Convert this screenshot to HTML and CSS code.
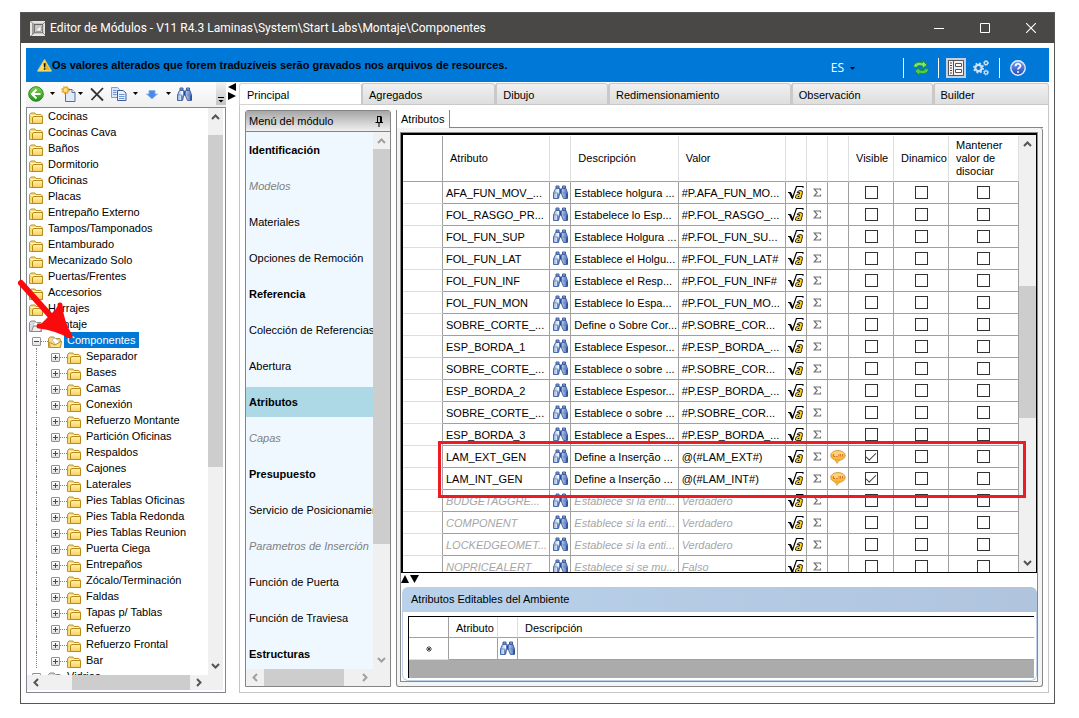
FILE: index.html
```html
<!DOCTYPE html>
<html lang="es">
<head>
<meta charset="utf-8">
<title>Editor de Módulos</title>
<link rel="stylesheet" href="styles.css">
</head>
<body>
<svg class="defs" aria-hidden="true">
  <defs>
    <linearGradient id="gFolder" x1="0" y1="0" x2="0" y2="1"><stop offset="0" stop-color="#fff3b0"/><stop offset="1" stop-color="#f6cf58"/></linearGradient>
    <linearGradient id="gGreen" x1="0" y1="0" x2="0" y2="1"><stop offset="0" stop-color="#7fd34a"/><stop offset="1" stop-color="#1f8f1c"/></linearGradient>
    <linearGradient id="gTube" x1="0" y1="0" x2="1" y2="0"><stop offset="0" stop-color="#8fb0e0"/><stop offset=".35" stop-color="#f4f9ff"/><stop offset="1" stop-color="#4a6fb8"/></linearGradient>
    <linearGradient id="gHelp" x1="0" y1="0" x2="0" y2="1"><stop offset="0" stop-color="#7fa3f0"/><stop offset="1" stop-color="#1c46c0"/></linearGradient>
  </defs>
  <symbol id="folder" viewBox="0 0 14 12"><path d="M.5 11.500V2.500L2 1h4l1 1.500h5l1 1v8z" fill="#f8dc80" stroke="#bd9430"/><path d="M3.500 11.500V6L4.500 4.500h9v7z" fill="url(#gFolder)" stroke="#b88a1c"/><path d="M2 3.500h10" stroke="#fff8d0"/></symbol>
  <symbol id="folder-open" viewBox="0 0 14 12"><path d="M.5 11.500V2.500L2 1h4l1 1.500h5l.5 2v7z" fill="#f0d890" stroke="#b8902c"/><path d="M4 4l3-2 5 4-4 3z" fill="#fff" stroke="#aaa" stroke-width=".6"/><path d="M2.500 11.500L.5 6 7 9l6.500-4-1 6.500z" fill="#fbe08a" stroke="#b8902c"/></symbol>
  <symbol id="folder-gray" viewBox="0 0 14 12"><path d="M.5 11.500V2.500L2 1h4l1 1.500h5l.5 2v7z" fill="#ddd" stroke="#888"/><path d="M4 4l3-2 5 4-4 3z" fill="#fff" stroke="#aaa" stroke-width=".6"/><path d="M2.500 11.500L4.500 6h9l-2 5.500z" fill="#eee" stroke="#888"/></symbol>
  <symbol id="binoc" viewBox="0 0 15 14"><path d="M3 1h3v2H3zM9.500 1h3v2h-3z" fill="#9db9e4" stroke="#2d4f94" stroke-width=".9"/><path d="M2.500 3.500h4.500v4L5.500 13.500h-5V8zM8.500 3.500H13L14.500 8v5.500h-4L8.500 9z" fill="url(#gTube)" stroke="#3a5da3" stroke-width=".9"/><path d="M6.500 4h2v4.500h-2zM.5 8h5M9.500 8h5" fill="#274a96" stroke="#5d7fc0" stroke-width=".7"/><path d="M5 8.500V13M14 8.500V13" stroke="#24458e" stroke-width="1.200"/></symbol>
  <symbol id="root" viewBox="0 0 16 15"><path d="M0 7.500h2L4.500 13 8.500 1.500H15" fill="none" stroke="#000" stroke-width="1.200"/><path d="M2 7.500L4.500 13" stroke="#000" stroke-width="2"/><path d="M15 1v2" stroke="#000"/><path d="M9 7.500Q10 5.500 12 5.500q3 0 2.500 2L13 13.500H8.500Q7 13.500 7.500 11.500 8 9.500 10 9h1.500V7.500z" fill="#ffcc12" stroke="#000" stroke-width=".8"/><path d="M9.800 11.500h1.400" stroke="#000"/></symbol>
  <symbol id="sigma" viewBox="0 0 9 9"><path d="M7.500 2.500V1H1.200l3 3.500-3 3.500h6.300V6.500" fill="none" stroke="#707070" stroke-width="1.200"/></symbol>
  <symbol id="bubble" viewBox="0 0 16 14"><ellipse cx="8" cy="5.500" rx="7.300" ry="5" fill="#fdb92c" stroke="#c9964a" stroke-width=".8"/><path d="M5 10.200L7 13.500 9.800 10z" fill="#f9bd3c" stroke="#c9964a" stroke-width=".6"/><ellipse cx="8" cy="3.800" rx="5.800" ry="2.600" fill="#ffd27a"/><path d="M3.500 4v2.500H5M6 6.500h1.500M9 4v2.500M10.500 4v2.500M12.500 4v2.500" fill="none" stroke="#cf6a2c" stroke-width=".9"/></symbol>
  <symbol id="chev-u" viewBox="0 0 9 6"><path d="M1 5l3.500-3.500L8 5" fill="none" stroke="currentColor" stroke-width="2"/></symbol>
  <symbol id="chev-d" viewBox="0 0 9 6"><path d="M1 1l3.500 3.500L8 1" fill="none" stroke="currentColor" stroke-width="2"/></symbol>
  <symbol id="chev-l" viewBox="0 0 6 9"><path d="M5 1L1.500 4.500 5 8" fill="none" stroke="currentColor" stroke-width="2"/></symbol>
  <symbol id="chev-r" viewBox="0 0 6 9"><path d="M1 1l3.500 3.500L1 8" fill="none" stroke="currentColor" stroke-width="2"/></symbol>
  <symbol id="caret" viewBox="0 0 5 3"><path d="M0 0h5L2.500 3z" fill="#000"/></symbol>
</svg>

<div class="window">
  <header class="titlebar">
    <svg class="app-icon" viewBox="0 0 16 16"><path d="M0 0h16v16H0z" fill="#e6e6e3"/><path d="M4.500 3.500h9v9h-9z" fill="#c6c6c3" stroke="#444"/><path d="M5 12L13 4v8z" fill="#f8f8f8"/><path d="M0 0l4.500 3.500M4.500 12.500L1 16M13.500 12.500L16 15M13.500 3.500L16 1M12 5v6M6 11h6" fill="none" stroke="#666" stroke-width=".8"/><path d="M3 3v11" stroke="#555" stroke-width=".8"/></svg>
    <h1 class="title">Editor de Módulos - V11 R4.3 Laminas\System\Start Labs\Montaje\Componentes</h1>
    <div class="win-buttons">
      <button type="button" aria-label="Minimizar"><svg viewBox="0 0 10 10"><path d="M0 5.500h10" stroke="#fff"/></svg></button>
      <button type="button" aria-label="Maximizar"><svg viewBox="0 0 10 10"><path d="M.5.5h9v9h-9z" fill="none" stroke="#fff"/></svg></button>
      <button type="button" aria-label="Cerrar"><svg viewBox="0 0 10 10"><path d="M0 0l10 10M10 0L0 10" stroke="#fff" stroke-width="1.100"/></svg></button>
    </div>
  </header>

  <div class="client">
    <div class="banner">
      <svg class="warn" viewBox="0 0 16 15"><path d="M8 1L15.500 13.500H.5z" fill="#ffe158" stroke="#d8c88a" stroke-linejoin="round"/><path d="M8 2.500L14 12.500 8 12z" fill="#e8b820"/><path d="M7 5h2.200l-.5 4.500H7.500zM7.200 10.500h1.700V12H7.200z" fill="#111"/></svg>
      <strong class="banner-text">Os valores alterados que forem traduzíveis serão gravados nos arquivos de resources.</strong>
      <div class="banner-tools">
        <button type="button" class="lang">ES <svg class="caret" viewBox="0 0 5 3"><use href="#caret"/></svg></button>
        <span class="sep"></span>
        <button type="button" class="tool" aria-label="Actualizar"><svg class="i16" viewBox="0 0 16 16"><path d="M.5 7C1 2.500 6 1.500 9.500 3V.5L14 5 9.500 8.500V6C6.500 4.800 4.500 5.500 3.500 7.500z" fill="#7be56c" stroke="#1f8a26" stroke-width=".8"/><path d="M15.500 9c-.5 4.500-5.500 5.500-9 4v2.500L2 11l4.500-3.500V10c3 1.200 5 .5 6-1.500z" fill="#4fce4a" stroke="#1f8a26" stroke-width=".8"/></svg></button>
        <span class="sep"></span>
        <button type="button" class="tool pressed" aria-label="Panel"><svg class="i16" viewBox="0 0 16 16"><path d="M.5.500h15v15H.5z" fill="#f4f4f4" stroke="#555"/><path d="M5.500 0v16" stroke="#555"/><path d="M2 3h2M2 5.500h2M2 8h2M2 10.500h2M2 13h2" stroke="#444"/><path d="M7.500 3.500h6v3h-6zM7.500 9.500h6v3h-6z" fill="#fff" stroke="#555"/></svg></button>
        <button type="button" class="tool" aria-label="Configuración"><svg class="i16" viewBox="0 0 16 16" fill="none" stroke="#d3e2f2"><circle cx="5.500" cy="8" r="3.200" stroke-width="2.200"/><circle cx="5.500" cy="8" r="4.700" stroke-width="1.600" stroke-dasharray="1.850 1.850"/><circle cx="13" cy="3" r="1.600" stroke-width="1.200"/><circle cx="13" cy="3" r="2.500" stroke-dasharray="1 1"/><circle cx="13" cy="12.500" r="1.600" stroke-width="1.200"/><circle cx="13" cy="12.500" r="2.500" stroke-dasharray="1 1"/></svg></button>
        <span class="sep"></span>
        <button type="button" class="tool help" aria-label="Ayuda"><svg class="i16" viewBox="0 0 16 16"><circle cx="8" cy="8" r="7.200" fill="url(#gHelp)" stroke="#e4ecfa" stroke-width="1.400"/><path d="M5.500 6.200C5.500 3 10.500 3 10.500 6c0 1.600-2.500 1.800-2.500 3.600" fill="none" stroke="#fff" stroke-width="1.700"/><circle cx="8" cy="12" r="1" fill="#fff"/></svg></button>
      </div>
    </div>

    <div class="workspace">
      <aside class="left">
        <div class="toolbar">
          <button type="button" class="tb" aria-label="Volver"><svg class="i16" viewBox="0 0 16 16"><circle cx="8" cy="8" r="7.300" fill="url(#gGreen)" stroke="#2c8a26"/><path d="M8.500 3.500L4 8l4.500 4.500M4.500 8H12.500" fill="none" stroke="#fff" stroke-width="2"/></svg><svg class="caret" viewBox="0 0 5 3"><use href="#caret"/></svg></button>
          <button type="button" class="tb tight" aria-label="Nuevo"><svg class="i16" viewBox="0 0 16 16"><path d="M4.500 3.500h6.500l3 3v9h-9.500z" fill="#dfe9f7" stroke="#5a6f96"/><path d="M11 3.500v3h3" fill="#fff" stroke="#5a6f96"/><circle cx="4.500" cy="4" r="2.600" fill="#ffe680" stroke="#f0a52a" stroke-width="1.400"/><circle cx="4.500" cy="4" r="3.800" fill="none" stroke="#e8941a" stroke-dasharray="1.500 1.480"/></svg><svg class="caret" viewBox="0 0 5 3"><use href="#caret"/></svg></button>
          <button type="button" class="tb" aria-label="Eliminar"><svg class="i16" viewBox="0 0 16 16"><path d="M2 2.500l12 12M14 2L2.500 14" stroke="#333" stroke-width="1.800"/></svg></button>
          <button type="button" class="tb" aria-label="Copiar"><svg class="i16" viewBox="0 0 16 16"><path d="M.5 1.500h6l2 2v8h-8z" fill="#d9e7fa" stroke="#7f9fd0"/><path d="M6.500 4.500h5.500l3 2.500v7.500H6.500z" fill="#e9f1fc" stroke="#3a5ea2"/><path d="M2 4.500h3.500M2 6.500h3.500M2 8.500h3.500M8 8.500h5.500M8 10.500h5.500M8 12.500h5.500" stroke="#6f97d4"/></svg><svg class="caret" viewBox="0 0 5 3"><use href="#caret"/></svg></button>
          <button type="button" class="tb" aria-label="Bajar"><svg class="i16" viewBox="0 0 16 16"><path d="M5 4.500h6V8h2.500L8 13 2.500 8H5z" fill="#4a8bea" stroke="#86aeea" stroke-width=".8"/></svg><svg class="caret" viewBox="0 0 5 3"><use href="#caret"/></svg></button>
          <button type="button" class="tb" aria-label="Buscar"><svg class="binoc" viewBox="0 0 15 14"><use href="#binoc"/></svg></button>
          <button type="button" class="overflow" aria-label="Más"><svg viewBox="0 0 6 6"><path d="M0 .5h6" stroke="#000"/><path d="M.5 3h5L3 5.500z"/></svg></button>
        </div>
        <div class="tree-box">
          <ul class="tree" id="tree"></ul>
          <div class="vscroll tree-v"><svg class="ch" viewBox="0 0 9 6"><use href="#chev-u"/></svg><i class="thumb"></i><svg class="ch" viewBox="0 0 9 6"><use href="#chev-d"/></svg></div>
          <div class="hscroll tree-h"><svg class="cv" viewBox="0 0 6 9"><use href="#chev-l"/></svg><i class="thumb"></i><svg class="cv" viewBox="0 0 6 9"><use href="#chev-r"/></svg></div>
        </div>
        <svg class="pointer" viewBox="0 0 60 66"><path d="M5 7L40 46" stroke="#fb0a0d" stroke-width="6" stroke-linecap="round"/><path d="M44 29Q45 46 54 60Q40 52 23 50" fill="#fb0a0d" stroke="#fb0a0d" stroke-width="5" stroke-linejoin="round" stroke-linecap="round"/></svg>
      </aside>

      <div class="vsplit"><svg viewBox="0 0 8 17"><path d="M8 0v8L0 4zM0 9v8l8-4z"/></svg></div>

      <main class="right">
        <nav class="tabs">
          <button type="button" class="tab t1 on">Principal</button>
          <button type="button" class="tab t2">Agregados</button>
          <button type="button" class="tab t3">Dibujo</button>
          <button type="button" class="tab t4">Redimensionamiento</button>
          <button type="button" class="tab t5">Observación</button>
          <button type="button" class="tab t6">Builder</button>
        </nav>
        <div class="page">
          <section class="menu">
            <h2 class="menu-head">Menú del módulo<svg class="pin" viewBox="0 0 8 11"><path d="M2 .5h4.500M2.500 1v5.500M5.500 1v5.500M6.500 1v5.500M.5 6.500h7.500M4 7v4" fill="none" stroke="#000"/></svg></h2>
            <div class="menu-body">
              <ul class="menu-list">
                <li class="b">Identificación</li><li class="off">Modelos</li><li>Materiales</li><li>Opciones de Remoción</li><li class="b">Referencia</li><li>Colección de Referencias</li><li>Abertura</li><li class="b sel">Atributos</li><li class="off">Capas</li><li class="b">Presupuesto</li><li>Servicio de Posicionamiento</li><li class="off">Parametros de Inserción</li><li>Función de Puerta</li><li>Función de Traviesa</li><li class="b">Estructuras</li>
              </ul>
              <div class="vscroll menu-v"><svg class="ch" viewBox="0 0 9 6"><use href="#chev-u"/></svg><i class="thumb"></i><svg class="ch" viewBox="0 0 9 6"><use href="#chev-d"/></svg></div>
              <div class="hscroll menu-h"><svg class="cv" viewBox="0 0 6 9"><use href="#chev-l"/></svg><i class="thumb"></i><svg class="cv" viewBox="0 0 6 9"><use href="#chev-r"/></svg></div>
            </div>
          </section>

          <section class="attrs">
            <div class="subtabs"><span class="subtab">Atributos</span><span class="subline"></span></div>
            <div class="attrs-frame">
              <div class="attrs-inner">
                <div class="grid">
                  <div class="grid-view">
                    <table class="data">
                      <colgroup><col class="c-head"><col><col class="c-icon"><col><col><col class="c-icon"><col class="c-icon"><col class="c-icon"><col class="c-vis"><col class="c-din"><col class="c-man"></colgroup>
                      <thead><tr><th></th><th>Atributo</th><th></th><th>Descripción</th><th>Valor</th><th></th><th></th><th></th><th>Visible</th><th>Dinamico</th><th>Mantener valor de disociar</th></tr></thead>
                      <tbody id="rows"></tbody>
                    </table>
                  </div>
                  <div class="vscroll grid-v"><svg class="ch" viewBox="0 0 9 6"><use href="#chev-u"/></svg><i class="thumb"></i><svg class="ch" viewBox="0 0 9 6"><use href="#chev-d"/></svg></div>
                  <div class="mark"></div>
                </div>
                <div class="hsplit"><svg viewBox="0 0 18 8"><path d="M0 8h8L4 0zM9 0h9l-4.500 8z"/></svg></div>
                <div class="ambient">
                  <h3 class="ambient-head">Atributos Editables del Ambiente</h3>
                  <div class="ambient-body">
                    <div class="ambient-grid">
                      <table class="env">
                        <colgroup><col class="c-head"><col class="c-atr"><col class="c-find"><col></colgroup>
                        <thead><tr><th></th><th>Atributo</th><th></th><th>Descripción</th></tr></thead>
                        <tbody><tr><td><svg class="star" viewBox="0 0 6 6"><path d="M3 0v6M0 3h6M1 1l4 4M5 1L1 5" stroke="#444"/></svg></td><td></td><td><svg class="binoc" viewBox="0 0 15 14"><use href="#binoc"/></svg></td><td></td></tr></tbody>
                      </table>
                    </div>
                  </div>
                </div>
              </div>
            </div>
          </section>
        </div>
      </main>
    </div>
  </div>
</div>
<script src="app.js"></script>
</body>
</html>
```

FILE: styles.css
```css
* { box-sizing: border-box; }
body {
  margin: 0;
  height: 100vh;
  padding: 12px 24px 14px 20px;
  background: #fff;
  color: #000;
  font: 11px/16px "Liberation Sans", Arial, sans-serif;
  overflow: hidden;
}
button { font: inherit; color: inherit; border: 0; padding: 0; background: none; }
h1, h2, h3, ul { margin: 0; padding: 0; font: inherit; list-style: none; }
svg { display: block; flex: none; }
.defs { position: absolute; width: 0; height: 0; }
.i16 { width: 16px; height: 16px; }
.binoc { width: 15px; height: 14px; }
.caret { width: 5px; height: 3px; }

.window { height: 100%; display: flex; flex-direction: column; border: 1px solid #565654; }
.titlebar { flex: none; height: 30px; display: flex; align-items: center; background: #4a4846; color: #fff; padding-left: 9px; }
.app-icon { width: 15px; height: 15px; }
.title { flex: 1; padding-left: 5px; font: 12px/16px Roboto, "Noto Sans", sans-serif; white-space: nowrap; }
.win-buttons { display: flex; }
.win-buttons button { width: 46px; height: 30px; display: grid; place-items: center; }
.win-buttons svg { width: 10px; height: 10px; }

.client { flex: 1; min-height: 0; padding: 5px 5px 10px; display: flex; flex-direction: column; }
.banner { flex: none; height: 34px; display: flex; align-items: center; background: #0078d7; padding: 0 21px 0 11px; }
.warn { width: 15px; height: 15px; }
.banner-text { flex: 1; white-space: nowrap; }
.banner-tools { display: flex; align-items: center; color: #fff; padding-top: 6px; }
.lang { display: flex; align-items: center; gap: 6px; font: 12px/16px "Open Sans", sans-serif; margin-right: 48px; }
.sep { width: 1px; height: 20px; background: #fff; }
.tool { width: 20px; height: 20px; margin: 0 7px; display: grid; place-items: center; }
.pressed { background: #c5d0e0; margin: 0 3px 0 7px; }
.pressed + .tool { margin: 0 8px 0 2px; }
.help { margin: 0 0 0 8px; }

.workspace { flex: 1; min-height: 0; display: flex; }
.left { position: relative; flex: none; width: 200px; display: flex; flex-direction: column; }
.toolbar { flex: none; height: 25px; display: flex; align-items: center; gap: 6px; padding: 0 0 2px 2px; background: linear-gradient(#fdfdfd, #f0f0f0); }
.tb { display: flex; align-items: center; gap: 6px; }
.tb.tight { gap: 1px; }
.overflow { margin-left: auto; align-self: stretch; width: 10px; display: flex; align-items: flex-end; justify-content: center; padding-bottom: 2px; background: linear-gradient(#f2f2f2, #c4c4c4); }
.overflow svg { width: 6px; height: 6px; }

.tree-box { flex: 1; min-height: 0; border: 1px solid #828790; padding: 0 2px 2px 0; display: grid; grid-template: 1fr 15px / 1fr 15px; }
.tree { overflow: hidden; min-height: 0; min-width: 0; }
.node { position: relative; height: 16px; display: flex; align-items: center; white-space: nowrap; padding-left: 2px; }
.node span { padding: 0 3px; margin-left: 2px; }
.node .fold { width: 14px; height: 12px; align-self: flex-end; }
.lvl1 { padding-left: 5px; }
.lvl2 { padding-left: 5px; }
.pm { position: relative; width: 9px; height: 9px; margin-top: 2px; border: 1px solid #919191; border-radius: 1px; background: linear-gradient(#fff, #e0e0e0); flex: none; }
.pm::before { content: ""; position: absolute; left: 1px; top: 3px; width: 5px; height: 1px; background: #2b4a9c; }
.plus::after { content: ""; position: absolute; left: 3px; top: 1px; width: 1px; height: 5px; background: #2b4a9c; }
.dash { width: 7px; height: 1px; margin-top: 2px; border-top: 1px dotted #808080; }
.guide { width: 1px; align-self: stretch; margin: 0 14px 0 4px; border-left: 1px dotted #808080; }
.picked span { background: #0078d7; color: #fff; }
.pointer { position: absolute; left: -10px; top: 194px; width: 60px; height: 66px; }

.vscroll, .hscroll { background: #f0f0f0; display: flex; align-items: center; color: #555; }
.vscroll { flex-direction: column; justify-content: space-between; padding: 6px 0; }
.hscroll { justify-content: space-between; padding: 0 6px; }
.ch { width: 9px; height: 6px; }
.cv { width: 6px; height: 9px; }
.thumb { background: #cdcdcd; align-self: stretch; }
.vscroll .thumb { width: 100%; }
.tree-v .thumb { height: 332px; margin: 15px 0 auto; }
.tree-h { grid-column: 1 / 3; padding-right: 21px; }
.tree-h .thumb { width: 118px; margin: 0 auto 0 33px; }

.vsplit { flex: none; width: 13px; padding: 1px 3px 0 2px; }
.vsplit svg { width: 8px; height: 17px; }

.right { flex: 1; min-width: 0; display: flex; flex-direction: column; padding-top: 1px; }
.tabs { flex: none; height: 22px; display: flex; }
.tab { text-align: left; padding: 2px 0 0 6px; border: 1px solid #c9c9c9; border-left-width: 2px; border-radius: 3px 3px 0 0; background: linear-gradient(#f0f0f0, #dedede); }
.tab.on { background: #fff; border-color: #d4d4d4; border-left-width: 1px; border-right: 0; padding-left: 7px; }
.t1 { flex: 122 1 0; }
.t2 { flex: 134 1 0; }
.t3 { flex: 111 1 0; }
.t4 { flex: 186 1 0; }
.t5 { flex: 142 1 0; }
.t6 { flex: 115 1 0; }
.page { flex: 1; min-height: 0; display: flex; gap: 5px; padding: 5px; border: 1px solid #c6c6c6; border-top: 0; }

.menu { flex: none; width: 146px; display: flex; flex-direction: column; border: 1px solid #848484; border-radius: 3px 3px 0 0; }
.menu-head { flex: none; height: 21px; display: flex; align-items: center; justify-content: space-between; padding: 0 7px 0 3px; background: linear-gradient(#a6a6a6, #f0f0f0); border-bottom: 1px solid #848484; }
.pin { width: 8px; height: 11px; }
.menu-body { flex: 1; min-height: 0; display: grid; grid-template: 1fr 17px / minmax(0, 1fr) 17px; background: #f0f0f0; }
.menu-list { overflow: hidden; background: #f0f8ff; padding-top: 3px; display: flex; flex-direction: column; gap: 6px; }
.menu-list li { flex: none; padding: 7px 0 7px 3px; white-space: nowrap; }
.menu-list .b { font-weight: bold; }
.menu-list .off { font-style: italic; color: #808080; }
.menu-list .sel { background: #add8e6; }
.menu-v, .menu-h { color: #a0a0a0; }
.menu-v .thumb { height: 395px; margin: 5px 0 auto; }
.menu-h .thumb { width: 80px; margin: 0 auto 0 6px; }
.menu-h { padding-right: 22px; grid-column: 1 / 3; }

.attrs { flex: 1; min-width: 0; display: flex; flex-direction: column; }
.subtabs { flex: none; height: 18px; display: flex; }
.subtab { width: 54px; padding-left: 4px; border: solid #868686; border-width: 0 1px; line-height: 18px; }
.subline { flex: 1; border-bottom: 1px solid #868686; }
.attrs-frame { flex: 1; min-height: 0; display: flex; padding: 4px 4px 4px 3px; border: solid #868686; border-width: 0 1px 1px; border-radius: 0 3px 3px 3px; background: #f4f4f4; }
.attrs-inner { flex: 1; min-width: 0; display: flex; flex-direction: column; border: 1px solid #8a8a8a; background: #fff; }
.grid { position: relative; flex: 1; min-height: 0; display: flex; border: solid #000; border-width: 2px 1px 1px 2px; }
.grid-view { flex: 1; min-width: 0; overflow: hidden; padding-top: 1px; }
.grid-v { flex: none; width: 17px; }
.grid-v .thumb { height: 132px; margin: 139px 0 auto; }
.mark { position: absolute; left: 35px; right: 10px; top: 306px; height: 57px; border: 3px solid #ed1c24; }

table { width: 100%; table-layout: fixed; border-collapse: separate; border-spacing: 0; }
.c-head { width: 40px; }
.c-icon { width: 21px; }
.c-vis { width: 45px; }
.c-din { width: 55px; }
.c-man { width: 70px; }
th { font-weight: normal; text-align: left; padding: 0 0 0 7px; border-right: 1px solid #dedede; border-bottom: 1px solid #a0a0a0; line-height: 13px; }
.data th { height: 46px; }
td { height: 22px; padding: 0 0 0 3px; border: solid #a0a0a0; border-width: 0 1px 1px 0; overflow: hidden; white-space: nowrap; line-height: 16px; }
td svg { margin: 0 auto; }
td:has(svg), td:has(input) { padding: 0; text-align: center; }
td .binoc { margin-bottom: 2px; }
th:first-child { border-right-color: #a0a0a0; }
td:first-child { border-bottom-color: #dedede; }
.rt { width: 16px; height: 15px; }
.sg { width: 9px; height: 9px; }
.bb { width: 16px; height: 14px; }
.dim { font-style: italic; color: #a6a6a6; }
input[type="checkbox"] { appearance: none; display: grid; place-items: center; width: 13px; height: 13px; margin: 0 auto; border: 1px solid #333; background: #fff; }
input[type="checkbox"]:checked::before { content: ""; width: 9px; height: 4px; margin-bottom: 3px; border: solid #444; border-width: 0 0 1px 1px; transform: rotate(-45deg); }

.hsplit { flex: none; height: 14px; padding-top: 2px; }
.hsplit svg { width: 18px; height: 8px; }
.ambient { flex: none; padding-left: 1px; }
.ambient-head { height: 25px; padding-left: 9px; border-radius: 6px 6px 0 0; background: linear-gradient(90deg, #b9d1ea, #b0c4de); line-height: 24px; }
.ambient-body { height: 69px; padding: 4px 2px 2px 5px; border: solid #b9d1ea; border-width: 0 1px 1px; border-radius: 0 0 6px 6px; }
.ambient-grid { height: 62px; border: solid #000; border-width: 1px 0 0 1px; background: #ababab; }
.env { background: #fff; }
.env th { height: 21px; padding-top: 2px; }
.env th:last-child, .env td:last-child { border-right: 0; }
.c-atr { width: 49px; }
.c-find { width: 20px; }
.star { width: 6px; height: 6px; }
```

FILE: app.js
```js
const folder = (name) => `<svg class="fold" viewBox="0 0 14 12"><use href="#${name}"/></svg>`;

const topLevel = ["Cocinas", "Cocinas Cava", "Baños", "Dormitorio", "Oficinas", "Placas", "Entrepaño Externo",
  "Tampos/Tamponados", "Entamburado", "Mecanizado Solo", "Puertas/Frentes", "Accesorios", "Herrajes"];
const children = ["Separador", "Bases", "Camas", "Conexión", "Refuerzo Montante", "Partición Oficinas", "Respaldos",
  "Cajones", "Laterales", "Pies Tablas Oficinas", "Pies Tabla Redonda", "Pies Tablas Reunion", "Puerta Ciega",
  "Entrepaños", "Zócalo/Terminación", "Faldas", "Tapas p/ Tablas", "Refuerzo", "Refuerzo Frontal", "Bar"];

document.getElementById("tree").innerHTML =
  topLevel.map((t) => `<li class="node">${folder("folder")}<span>${t}</span></li>`).join("") +
  `<li class="node">${folder("folder-gray")}<span>Montaje</span></li>` +
  `<li class="node lvl1 picked"><i class="pm"></i><i class="dash"></i>${folder("folder-open")}<span>Componentes</span></li>` +
  children.map((t) => `<li class="node lvl2"><i class="guide"></i><i class="pm plus"></i><i class="dash"></i>${folder("folder")}<span>${t}</span></li>`).join("") +
  `<li class="node lvl1"><i class="pm plus"></i><i class="dash"></i>${folder("folder-gray")}<span>Vidrios</span></li>`;

const rows = [
  ["AFA_FUN_MOV_...", "Establece holgura ...", "#P.AFA_FUN_MO..."],
  ["FOL_RASGO_PR...", "Estabelece lo Esp...", "#P.FOL_RASGO_..."],
  ["FOL_FUN_SUP", "Establece Holgura ...", "#P.FOL_FUN_SU..."],
  ["FOL_FUN_LAT", "Establece el Holgu...", "#P.FOL_FUN_LAT#"],
  ["FOL_FUN_INF", "Establece el Resp...", "#P.FOL_FUN_INF#"],
  ["FOL_FUN_MON", "Establece lo Espa...", "#P.FOL_FUN_MO..."],
  ["SOBRE_CORTE_...", "Define o Sobre Cor...", "#P.SOBRE_COR..."],
  ["ESP_BORDA_1", "Establece Espesor...", "#P.ESP_BORDA_..."],
  ["SOBRE_CORTE_...", "Establece o sobre ...", "#P.SOBRE_COR..."],
  ["ESP_BORDA_2", "Establece Espesor...", "#P.ESP_BORDA_..."],
  ["SOBRE_CORTE_...", "Establece o sobre ...", "#P.SOBRE_COR..."],
  ["ESP_BORDA_3", "Establece a Espes...", "#P.ESP_BORDA_..."],
  ["LAM_EXT_GEN", "Define a Inserção ...", "@(#LAM_EXT#)", "note"],
  ["LAM_INT_GEN", "Define a Inserção ...", "@(#LAM_INT#)", "note"],
  ["BUDGETAGGRE...", "Establece si la enti...", "Verdadero", "dim"],
  ["COMPONENT", "Establece si la enti...", "Verdadero", "dim"],
  ["LOCKEDGEOMET...", "Establece si la enti...", "Verdadero", "dim"],
  ["NOPRICEALERT", "Establece si se mu...", "Falso", "dim"],
];

document.getElementById("rows").innerHTML = rows.map(([name, text, value, kind]) => {
  const note = kind === "note";
  const box = (label, on) => `<td><input type="checkbox" aria-label="${label}"${on ? " checked" : ""}></td>`;
  return `<tr class="${kind === "dim" ? "dim" : ""}"><td></td><td>${name}</td>
    <td><svg class="binoc" viewBox="0 0 15 14"><use href="#binoc"/></svg></td><td>${text}</td><td>${value}</td>
    <td><svg class="rt" viewBox="0 0 16 15"><use href="#root"/></svg></td>
    <td><svg class="sg" viewBox="0 0 9 9"><use href="#sigma"/></svg></td>
    <td>${note ? '<svg class="bb" viewBox="0 0 16 14"><use href="#bubble"/></svg>' : ""}</td>
    ${box("Visible", note)}${box("Dinamico")}${box("Mantener valor de disociar")}</tr>`;
}).join("");
```
